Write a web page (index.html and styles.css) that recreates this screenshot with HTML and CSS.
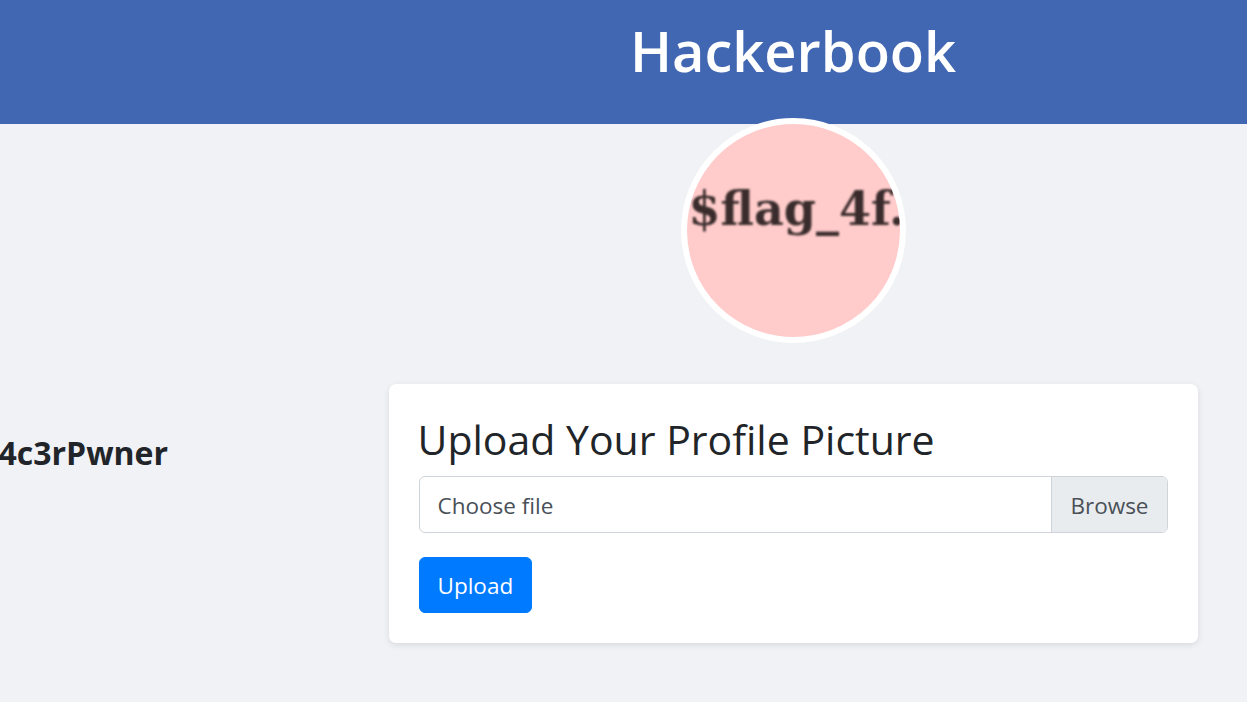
FILE: index.html
```html
<!DOCTYPE html>
<html lang="en">
<head>
<meta charset="utf-8">
<title>Hackerbook</title>
<link rel="stylesheet" href="styles.css">
</head>
<body>
<div class="page">
  <header class="topbar">
    <h1 class="brand">Hackerbook</h1>
  </header>
  <div class="avatar-wrap">
    <div class="avatar"><span class="avatar-text">$flag_4f.</span></div>
  </div>
  <main class="main">
    <div class="side">
      <h4 class="username">H4c3rPwner</h4>
    </div>
    <section class="card">
      <h3 class="card-title">Upload Your Profile Picture</h3>
      <div class="file-field">
        <span class="file-label">Choose file</span>
        <span class="file-browse">Browse</span>
      </div>
      <button class="btn-upload" type="button">Upload</button>
    </section>
    <div class="side"></div>
  </main>
</div>
</body>
</html>
```

FILE: styles.css
```css
html, body {
  margin: 0;
  padding: 0;
  overflow: hidden;
}
body {
  background: #f0f2f5;
  font-family: "Open Sans", "Noto Sans", "Liberation Sans", sans-serif;
  color: #212529;
  width: 1247px;
  height: 702px;
}
.page {
  width: 1700px;
  margin-left: -57px;
}
.topbar {
  background: #4267b2;
  height: 124px;
  display: flex;
  align-items: center;
  justify-content: center;
}
.brand {
  margin: 0;
  color: #fff;
  font-size: 56px;
  font-weight: 600;
  line-height: 1.2;
  padding-bottom: 22px;
}
.avatar-wrap {
  display: flex;
  justify-content: center;
  margin-top: -6px;
}
.avatar {
  width: 213px;
  height: 213px;
  border: 6px solid #fff;
  border-radius: 50%;
  background: #ffcccb;
  overflow: hidden;
  display: flex;
  align-items: flex-start;
  white-space: nowrap;
}
.avatar-text {
  font-family: "DejaVu Serif", "Liberation Serif", serif;
  font-size: 46px;
  font-weight: 700;
  color: #3a2c2c;
  margin-top: 58px;
  margin-left: 2px;
  letter-spacing: 0;
  filter: blur(0.8px);
}
.main {
  display: grid;
  grid-template-columns: 1fr 809px 1fr;
  margin-top: 41px;
}
.side {
  padding-left: 31px;
}
.username {
  margin: 50px 0 0 0;
  font-size: 32px;
  font-weight: 700;
  line-height: 1.2;
}
.card {
  background: #fff;
  border-radius: 7px;
  box-shadow: 0 2px 6px rgba(0, 0, 0, 0.1);
  padding: 30px;
}
.card-title {
  margin: 0 0 12px -1px;
  font-size: 41px;
  font-weight: 400;
  line-height: 50px;
}
.file-field {
  display: flex;
  height: 57px;
  border: 1px solid #ced4da;
  border-radius: 6px;
  box-sizing: border-box;
  overflow: hidden;
  font-size: 22.5px;
  color: #495057;
  margin-bottom: 24px;
}
.file-label {
  flex: 1;
  display: flex;
  align-items: center;
  padding: 1px 18px 0;
}
.file-browse {
  display: flex;
  align-items: center;
  padding: 1px 18px 0;
  background: #e9ecef;
  border-left: 1px solid #ced4da;
}
.btn-upload {
  font-family: inherit;
  font-size: 22.5px;
  color: #fff;
  background: #007bff;
  border: 1px solid #007bff;
  border-radius: 6px;
  height: 56px;
  padding: 2px 18px 0;
  line-height: 1;
  cursor: pointer;
}
```
